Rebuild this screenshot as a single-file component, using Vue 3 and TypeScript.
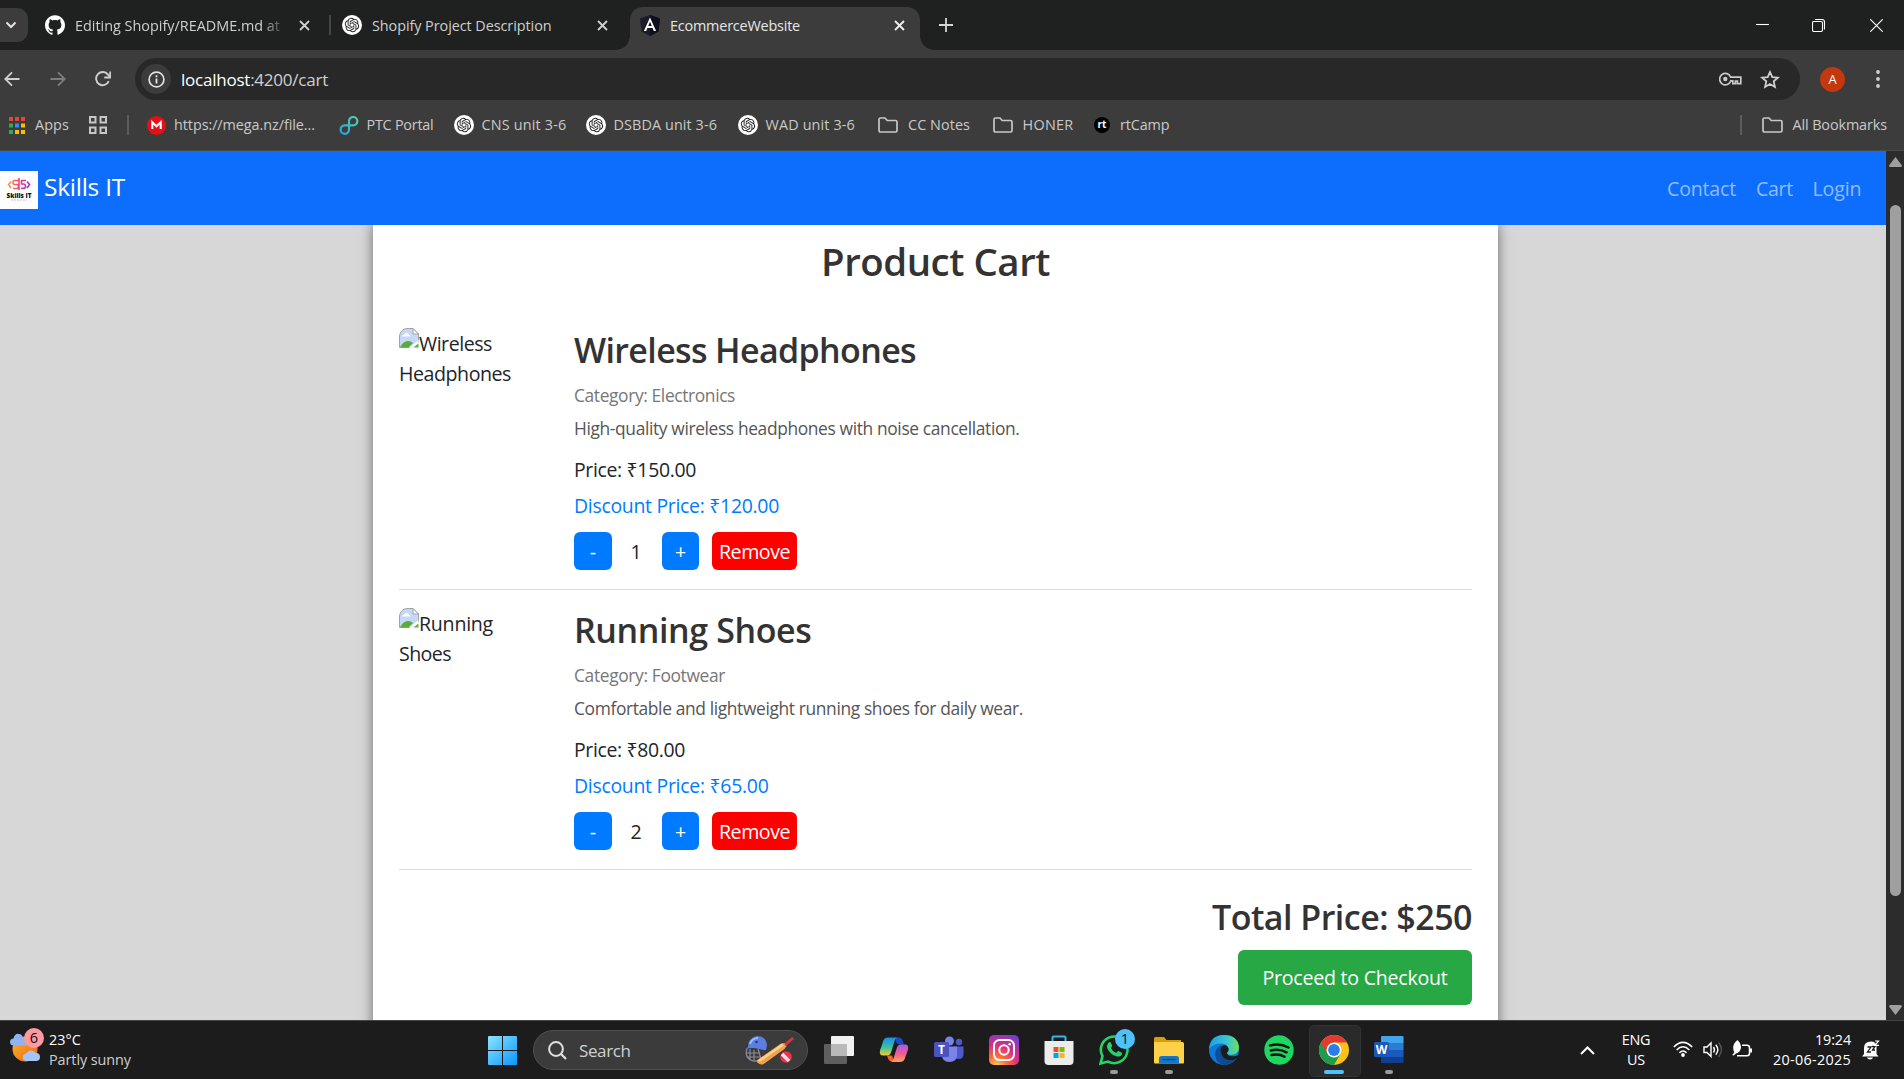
<script setup lang="ts">
interface Bookmark { label: string; icon: string; pitch: number; width: number }
interface CartItem {
  name: string; alt: string[]; altWidths: number[]; category: string; description: string
  price: string; discount: string; qty: number; widths: number[]
}

// Tracks a label in or out so that it takes exactly the given width.
const vFit = {
  mounted(el: HTMLElement, binding: { value: number }) {
    const range = document.createRange()
    range.selectNodeContents(el)
    const natural = range.getBoundingClientRect().width
    const count = (el.textContent ?? '').trim().length
    if (count) el.style.letterSpacing = `${(binding.value - natural) / count}px`
  },
}

const bookmarks: Bookmark[] = [
  { label: 'https://mega.nz/file...', icon: 'mega', pitch: 192.5, width: 141 },
  { label: 'PTC Portal', icon: 'ptc', pitch: 115, width: 67 },
  { label: 'CNS unit 3-6', icon: 'gpt', pitch: 132, width: 85 },
  { label: 'DSBDA unit 3-6', icon: 'gpt', pitch: 152, width: 103.5 },
  { label: 'WAD unit 3-6', icon: 'gpt', pitch: 140.5, width: 89.5 },
  { label: 'CC Notes', icon: 'folder', pitch: 114.5, width: 62 },
  { label: 'HONER', icon: 'folder', pitch: 99.5, width: 51 },
  { label: 'rtCamp', icon: 'rt', pitch: 90, width: 49.5 },
]

const items: CartItem[] = [
  {
    name: 'Wireless Headphones', alt: ['Wireless', 'Headphones'], altWidths: [73, 112],
    category: 'Category: Electronics', description: 'High-quality wireless headphones with noise cancellation.',
    price: 'Price: ₹150.00', discount: 'Discount Price: ₹120.00', qty: 1, widths: [342, 161, 445.5, 122, 205],
  },
  {
    name: 'Running Shoes', alt: ['Running', 'Shoes'], altWidths: [74, 52],
    category: 'Category: Footwear', description: 'Comfortable and lightweight running shoes for daily wear.',
    price: 'Price: ₹80.00', discount: 'Discount Price: ₹65.00', qty: 2, widths: [237.5, 151, 449, 111, 194.5],
  },
]

const knot = 'M22.2819 9.8211a5.9847 5.9847 0 0 0-.5157-4.9108 6.0462 6.0462 0 0 0-6.5098-2.9A6.0651 6.0651 0 0 0 4.9807 4.1818a5.9847 5.9847 0 0 0-3.9977 2.9 6.0462 6.0462 0 0 0 .7427 7.0966 5.98 5.98 0 0 0 .511 4.9107 6.051 6.051 0 0 0 6.5146 2.9001A5.9847 5.9847 0 0 0 13.2599 24a6.0557 6.0557 0 0 0 5.7718-4.2058 5.9894 5.9894 0 0 0 3.9977-2.9001 6.0557 6.0557 0 0 0-.7475-7.0729zm-9.022 12.6081a4.4755 4.4755 0 0 1-2.8764-1.0408l.1419-.0804 4.7783-2.7582a.7948.7948 0 0 0 .3927-.6813v-6.7369l2.02 1.1686a.071.071 0 0 1 .038.052v5.5826a4.504 4.504 0 0 1-4.4945 4.4944zm-9.6607-4.1254a4.4708 4.4708 0 0 1-.5346-3.0137l.142.0852 4.783 2.7582a.7712.7712 0 0 0 .7806 0l5.8428-3.3685v2.3324a.0804.0804 0 0 1-.0332.0615L9.74 19.9502a4.4992 4.4992 0 0 1-6.1408-1.6464zM2.3408 7.8956a4.485 4.485 0 0 1 2.3655-1.9728V11.6a.7664.7664 0 0 0 .3879.6765l5.8144 3.3543-2.0201 1.1685a.0757.0757 0 0 1-.071 0l-4.8303-2.7865A4.504 4.504 0 0 1 2.3408 7.872zm16.5963 3.8558L13.1038 8.364 15.1192 7.2a.0757.0757 0 0 1 .071 0l4.8303 2.7913a4.4944 4.4944 0 0 1-.6765 8.1042v-5.6772a.79.79 0 0 0-.407-.667zm2.0107-3.0231l-.142-.0852-4.7735-2.7818a.7759.7759 0 0 0-.7854 0L9.409 9.2297V6.8974a.0662.0662 0 0 1 .0284-.0615l4.8303-2.7866a4.4992 4.4992 0 0 1 6.6802 4.66zM8.3065 12.863l-2.02-1.1638a.0804.0804 0 0 1-.038-.0567V6.0742a4.4992 4.4992 0 0 1 7.3757-3.4537l-.142.0805L8.704 5.459a.7948.7948 0 0 0-.3927.6813zm1.0976-2.3654l2.602-1.4998 2.6069 1.4998v2.9994l-2.5974 1.4997-2.6067-1.4997Z'
</script>

<template>
  <div class="screen">
    <header class="tabs">
      <div class="tab-search">
        <svg width="12" height="8" viewBox="0 0 12 8"><path d="M1.5 1.5 6 6l4.500-4.500" fill="none" stroke="#e3e3e3" stroke-width="2" /></svg>
      </div>
      <div class="tab tab-a">
        <svg width="20" height="20" viewBox="0 0 24 24"><path fill="#fff" d="M12 .297c-6.630 0-12 5.373-12 12 0 5.303 3.438 9.800 8.205 11.385.6.113.82-.258.82-.577 0-.285-.01-1.040-.015-2.040-3.338.724-4.042-1.610-4.042-1.610C4.422 18.070 3.633 17.700 3.633 17.700c-1.087-.744.084-.729.084-.729 1.205.084 1.838 1.236 1.838 1.236 1.070 1.835 2.809 1.305 3.495.998.108-.776.417-1.305.76-1.605-2.665-.3-5.466-1.332-5.466-5.930 0-1.310.465-2.380 1.235-3.220-.135-.303-.54-1.523.105-3.176 0 0 1.005-.322 3.300 1.230.96-.267 1.980-.399 3-.405 1.020.006 2.040.138 3 .405 2.280-1.552 3.285-1.230 3.285-1.230.645 1.653.24 2.873.12 3.176.765.84 1.230 1.910 1.230 3.220 0 4.610-2.805 5.625-5.475 5.920.42.36.81 1.096.81 2.220 0 1.606-.015 2.896-.015 3.286 0 .315.21.69.825.57C20.565 22.092 24 17.592 24 12.297c0-6.627-5.373-12-12-12" /></svg>
        <span class="tab-title fade"><span v-fit="205">Editing Shopify/README.md at</span></span>
        <svg class="x" width="11" height="11" viewBox="0 0 11 11"><path d="M1 1l9 9M10 1l-9 9" /></svg>
      </div>
      <i class="tab-sep"></i>
      <div class="tab tab-b">
        <svg width="20" height="20" viewBox="0 0 20 20"><circle cx="10" cy="10" r="10" fill="#fff" /><path :d="knot" transform="translate(2.800 2.800) scale(.6)" fill="#222" /></svg>
        <span class="tab-title"><span v-fit="179.5">Shopify Project Description</span></span>
        <svg class="x" width="11" height="11" viewBox="0 0 11 11"><path d="M1 1l9 9M10 1l-9 9" /></svg>
      </div>
      <div class="tab tab-c">
        <svg width="20" height="21" viewBox="0 0 20 21"><path d="M10 0l10 3.500-1.500 13L10 21l-8.500-4.500L0 3.500z" fill="#1b1c2b" /><path d="M10 0v21l8.500-4.500L20 3.500z" fill="#0e0f1c" /><path d="M10 2.500 3.900 16h2.300l1.200-3.100h5.200l1.200 3.100h2.300zM10 6.700l1.800 4.300H8.200z" fill="#fff" /></svg>
        <span class="tab-title on"><span v-fit="130">EcommerceWebsite</span></span>
        <svg class="x on" width="11" height="11" viewBox="0 0 11 11"><path d="M1 1l9 9M10 1l-9 9" /></svg>
      </div>
      <svg class="plus" width="14" height="14" viewBox="0 0 14 14"><path d="M7 0v14M0 7h14" stroke="#d5d5d5" stroke-width="1.800" /></svg>
      <div class="win-controls">
        <svg width="13" height="13" viewBox="0 0 13 13"><path d="M0 5.500h13" /></svg>
        <svg width="13" height="13" viewBox="0 0 13 13"><rect x=".5" y="2.500" width="10" height="10" rx="1.500" /><path d="M3 .5h7a2.500 2.500 0 0 1 2.500 2.500v7.500" /></svg>
        <svg width="13" height="13" viewBox="0 0 13 13"><path d="M.3.3l12.400 12.400M12.700.3.3 12.700" /></svg>
      </div>
    </header>

    <div class="toolbar">
      <svg class="back" width="16" height="16" viewBox="0 0 16 16"><path d="M15.500 8H1.500M8 1.300 1.300 8 8 14.700" fill="none" stroke="#d0d0d0" stroke-width="1.800" /></svg>
      <svg class="forward" width="16" height="16" viewBox="0 0 16 16"><path d="M.5 8h14M8 1.300 14.700 8 8 14.700" fill="none" stroke="#7d7d7d" stroke-width="1.800" /></svg>
      <svg class="reload" width="16" height="16" viewBox="0 0 16 16"><path d="M13.800 10.200A6.600 6.600 0 1 1 13 3.600L14.600 5.500" fill="none" stroke="#d0d0d0" stroke-width="1.900" /><path d="M15.200.6v5.900H9.300" fill="none" stroke="#d0d0d0" stroke-width="1.800" /></svg>
      <div class="omnibox">
        <span class="info"><svg width="17" height="17" viewBox="0 0 17 17"><circle cx="8.500" cy="8.500" r="7.400" fill="none" stroke="#e3e3e3" stroke-width="1.700" /><path d="M8.500 7.500v5M8.500 4.300v1.900" stroke="#e3e3e3" stroke-width="1.800" /></svg></span>
        <span class="url"><span v-fit="147">localhost<span class="path">:4200/cart</span></span></span>
        <svg class="key" width="23" height="14" viewBox="0 0 23 14"><path d="M11.700 5.200H21.800v6.500h-3.400V9h-2v2.700h-2.600V8.800h-2A5.700 5.700 0 1 1 11.700 5.200z" fill="none" stroke="#c9c9c9" stroke-width="1.700" /><circle cx="6.300" cy="7" r="2.200" fill="#c9c9c9" /></svg>
        <svg class="star" width="20" height="19" viewBox="0 0 20 19"><path d="M10 2l2.300 5.100 5.600.6-4.200 3.700 1.200 5.500L10 14l-4.900 2.900 1.200-5.500-4.200-3.700 5.600-.6z" fill="none" stroke="#d0d0d0" stroke-width="1.800" /></svg>
      </div>
      <span class="avatar">A</span>
      <svg class="dots" width="4" height="18" viewBox="0 0 4 18"><g fill="#d0d0d0"><circle cx="2" cy="2" r="1.900" /><circle cx="2" cy="9" r="1.900" /><circle cx="2" cy="16" r="1.900" /></g></svg>
    </div>

    <nav class="bookmarks">
      <svg width="16" height="17" viewBox="0 0 16 17" class="apps"><path d="M0 0h4v4H0zM6 0h4v4H6zM12 0h4v4h-4z" fill="#ea4335" /><path d="M0 6.500h4v4H0zM0 13h4v4H0z" fill="#34a853" /><path d="M6 6.500h4v4H6z" fill="#4285f4" /><path d="M12 6.500h4v4h-4zM6 13h4v4H6zM12 13h4v4h-4z" fill="#fbbc04" /></svg>
      <span class="bm-label apps-label"><span v-fit="34">Apps</span></span>
      <svg width="18" height="18" viewBox="0 0 18 18" class="groups"><path d="M1 1h5.500v5.500H1zM11.500 1H17v5.500h-5.500zM1 11.500h5.500V17H1zM11.500 11.500H17V17h-5.500z" fill="none" stroke="#c7c7c7" stroke-width="2" /></svg>
      <i class="bm-sep"></i>
      <div v-for="b in bookmarks" :key="b.label" class="bm" :style="{ width: b.pitch + 'px' }">
        <span class="bm-icon">
          <svg v-if="b.icon === 'mega'" width="19" height="19" viewBox="0 0 19 19"><circle cx="9.500" cy="9.500" r="9.500" fill="#e60f18" /><path d="M5.300 13V6.200l4.200 4 4.200-4V13" fill="none" stroke="#fff" stroke-width="2.100" /></svg>
          <svg v-else-if="b.icon === 'ptc'" width="20" height="20" viewBox="0 0 20 20">
            <defs><linearGradient id="ptc" x1="0" y1="1" x2="1" y2="0"><stop offset="0" stop-color="#23a6dc" /><stop offset="1" stop-color="#57cfa8" /></linearGradient></defs>
            <path d="M10 14.500V5.500a4.200 4.200 0 1 1 4.200 4.900H5.500a4.200 4.200 0 1 0 4.500 4.100z" fill="none" stroke="url(#ptc)" stroke-width="2.200" />
          </svg>
          <svg v-else-if="b.icon === 'gpt'" width="20" height="20" viewBox="0 0 20 20"><circle cx="10" cy="10" r="10" fill="#fff" /><path :d="knot" transform="translate(2.800 2.800) scale(.6)" fill="#222" /></svg>
          <svg v-else-if="b.icon === 'folder'" width="20" height="16" viewBox="0 0 20 16"><path d="M1 13V2.500Q1 1 2.500 1H7l2.200 2.500h8.300q1.500 0 1.500 1.500v8.500q0 1.500-1.500 1.500h-15Q1 15 1 13z" fill="none" stroke="#c7c7c7" stroke-width="1.700" /></svg>
          <span v-else class="rt">rt</span>
        </span>
        <span class="bm-label" :class="{ wide: b.icon === 'folder' }"><span v-fit="b.width">{{ b.label }}</span></span>
      </div>
      <div class="all">
        <i class="bm-sep"></i>
        <svg width="21" height="16" viewBox="0 0 21 16"><path d="M1 13V2.500Q1 1 2.500 1H7l2.200 2.500h9.300q1.500 0 1.500 1.500v8.500q0 1.500-1.500 1.500h-16Q1 15 1 13z" fill="none" stroke="#c7c7c7" stroke-width="1.700" /></svg>
        <span class="bm-label"><span v-fit="94.5">All Bookmarks</span></span>
      </div>
    </nav>

    <div class="viewport">
      <main class="page">
        <div class="navbar">
          <svg class="logo" width="38" height="38" viewBox="0 0 38 38">
            <defs><linearGradient id="lg" x1="0" x2="1"><stop offset="0" stop-color="#ff9a3c" /><stop offset=".5" stop-color="#f4437a" /><stop offset="1" stop-color="#9b30d9" /></linearGradient></defs>
            <rect width="38" height="38" fill="#fff" />
            <path d="M11 10.500 8.500 13.500 11 17M27 10.500l2.500 3-2.500 3.500M19.500 9.500h-5q-1.500 0-1.500 2t1.500 2h2.500q1.500 0 1.500 2t-1.500 2h-4M19 7v12M26 9.500h-4.500v3.500h2q2 0 2 2.200t-2 2.200h-2.500" fill="none" stroke="url(#lg)" stroke-width="1.600" />
            <text x="6.500" y="26.500" font-size="6" font-weight="800" textLength="25" lengthAdjust="spacingAndGlyphs" fill="#111" font-family="Open Sans, sans-serif">Skills IT</text>
            <path d="M11 29h16" stroke="#dba6ec" stroke-width="1" stroke-dasharray="2 1" />
          </svg>
          <span class="brand"><span v-fit="81">Skills IT</span></span>
          <span class="links"><a class="l1"><span v-fit="69">Contact</span></a><a class="l2"><span v-fit="37">Cart</span></a><a class="l3"><span v-fit="49">Login</span></a></span>
        </div>
        <section class="card">
          <h1><span v-fit="229">Product Cart</span></h1>
          <article v-for="it in items" :key="it.name" class="item">
            <div class="thumb">
              <div class="alt">
                <svg width="20" height="20" viewBox="0 0 20 20">
                  <path d="M.5 19.500V8Q1.500 1 8 .5h6L19.500 6v8L14 19.500z" fill="#c5d8f8" stroke="#a3a3a3" />
                  <path d="M14 .5V6h5.500z" fill="#fff" stroke="#a3a3a3" />
                  <path d="M3 8.500q.5-2 2.500-2 .5-2 2.500-1.500Q10 5.500 10 7q1.500 0 1.500 1.500z" fill="#fff" />
                  <path d="M1 19.500q3-6.500 8-6.500 3 0 5 2l-4.500 4.500z" fill="#5aad3a" />
                  <path d="M10 20l9.500-8v3L14 20z" fill="#fff" /><path d="M14.500 19.500 19.500 15.500v4z" fill="#5aad3a" />
                </svg><span v-fit="it.altWidths[0]">{{ it.alt[0] }}</span>
              </div>
              <div class="alt"><span v-fit="it.altWidths[1]">{{ it.alt[1] }}</span></div>
            </div>
            <div class="details">
              <h2><span v-fit="it.widths[0]">{{ it.name }}</span></h2>
              <p class="category"><span v-fit="it.widths[1]">{{ it.category }}</span></p>
              <p class="description"><span v-fit="it.widths[2]">{{ it.description }}</span></p>
              <p class="price"><span v-fit="it.widths[3]">{{ it.price }}</span></p>
              <p class="discount"><span v-fit="it.widths[4]">{{ it.discount }}</span></p>
              <div class="controls">
                <button class="minus">-</button><span class="qty">{{ it.qty }}</span><button class="add">+</button>
                <button class="remove"><span v-fit="71">Remove</span></button>
              </div>
            </div>
          </article>
          <div class="summary">
            <h2><span v-fit="260">Total Price: $250</span></h2>
            <button class="checkout"><span v-fit="185">Proceed to Checkout</span></button>
          </div>
        </section>
      </main>
      <aside class="scrollbar">
        <svg width="13" height="10" viewBox="0 0 13 10"><path d="M6.500 0 13 8.500q0 1.500-1.500 1.500h-10Q0 10 0 8.500z" fill="#9f9f9f" /></svg>
        <i class="thumb-bar"></i>
        <svg width="13" height="10" viewBox="0 0 13 10"><path d="M6.500 10 13 1.500Q13 0 11.500 0h-10Q0 0 0 1.500z" fill="#9f9f9f" /></svg>
      </aside>
    </div>

    <footer class="taskbar">
      <div class="weather">
        <svg width="36" height="36" viewBox="0 0 36 36">
          <defs><linearGradient id="sun" x1="0" y1="0" x2="1" y2="1"><stop offset="0" stop-color="#f8b62d" /><stop offset="1" stop-color="#f0640f" /></linearGradient></defs>
          <circle cx="16" cy="21" r="12.500" fill="url(#sun)" />
          <path d="M4.500 17.500a3.500 3.500 0 0 1 0-7Q6 5 10 6 13 6 14 9.500L17.500 17.500z" fill="#8fb4f2" />
          <path d="M17 33a3.800 3.800 0 0 1 0-7.500 6 6 0 0 1 10-.5 4 4 0 0 1 0 8z" fill="#a4c4fa" />
        </svg>
        <span class="wbadge">6</span>
        <div class="wtext"><span><b v-fit="32">23°C</b></span><span class="dim"><b v-fit="82">Partly sunny</b></span></div>
      </div>
      <svg class="start" width="29" height="29" viewBox="0 0 29 29"><defs><linearGradient id="win" x1="0" y1="0" x2="1" y2="1" ><stop offset="0" stop-color="#8be3ff" /><stop offset="1" stop-color="#0a97ff" /></linearGradient></defs><path d="M1 0h13v14H0V1q0-1 1-1zM15 0h13q1 0 1 1v13H15zM0 15h14v14H1q-1 0-1-1zM15 15h14v13q0 1-1 1H15z" fill="url(#win)" /></svg>
      <div class="search">
        <svg class="glass" width="19" height="19" viewBox="0 0 19 19"><circle cx="8" cy="8" r="6.900" fill="none" stroke="#e0e0e0" stroke-width="2" /><path d="M13 13l5 5" stroke="#e0e0e0" stroke-width="2.300" /></svg>
        <span class="search-label"><span v-fit="51.5">Search</span></span>
        <svg class="cricket" width="50" height="30" viewBox="0 0 50 30">
          <path d="M3 14q-3 9 6 12 6 1 10-3M6 14v11M10 15v11M2 18h14M3 22h14M14 14l3 10" fill="none" stroke="#8b8b98" stroke-width="1.200" />
          <path d="M1 14.500 4 12Q4 3 13 1q9 0 10 9l-1 5q-4 0-7-1-7-2-14 .5z" fill="#5b7fe0" /><path d="M6 9Q8 3 14 3" fill="none" stroke="#9db8ff" stroke-width="2" /><circle cx="12.500" cy="7" r="1.300" fill="#243a86" />
          <path d="M12.500 25.500 37 8.500 41 8l1.500 3-2 3L19 29.500q-5 .5-6.500-4z" fill="#f0a24f" /><path d="M15 26 39 9.500" stroke="#ffd08c" stroke-width="2.400" /><path d="M41 10l8-7" stroke="#e0353f" stroke-width="2.600" />
          <circle cx="42" cy="22" r="5.800" fill="#ee3340" /><path d="M38 19l7 7" stroke="#fbd5e8" stroke-width="3.600" />
        </svg>
      </div>
      <div class="apps-row">
        <span class="app"><svg width="30" height="30" viewBox="0 0 30 30"><rect x="7" y="1" width="23" height="20" rx="1" fill="#f1f1f1" /><rect x="0" y="9" width="23" height="20" rx="1" fill="#5f5f5f" /><path d="M7 9h16v12H7z" fill="#b9b9b9" /></svg></span>
        <span class="app"><svg width="30" height="30" viewBox="0 0 30 30">
          <defs><linearGradient id="ca" x1="0" y1="0" x2="0" y2="1"><stop offset="0" stop-color="#1b8df0" /><stop offset=".55" stop-color="#3ac2a0" /><stop offset="1" stop-color="#f6c92d" /></linearGradient><linearGradient id="cb" x1="0" y1="0" x2="0" y2="1"><stop offset="0" stop-color="#a45bea" /><stop offset=".5" stop-color="#ee5a96" /><stop offset="1" stop-color="#ffa052" /></linearGradient></defs>
          <path d="M16 2.500h4q3 0 4 4l1 3h-4q-3 0-4-3z" fill="#1b49c8" /><path d="M8 20.500h5l2 6h-2q-3 0-4-3z" fill="#f0622f" />
          <path d="M9 2.500h10q-2.500 0-3.300 3L12 17.500q-.9 3-4 3H4q-4 0-3-5L4 6.500Q5 2.500 9 2.500z" fill="url(#ca)" />
          <path d="M21 27H11q2.500 0 3.300-3L18 12.500q.9-3 4-3h4q4 0 3 5L26 23q-1 4-5 4z" fill="url(#cb)" />
        </svg></span>
        <span class="app"><svg width="30" height="30" viewBox="0 0 30 30"><circle cx="25" cy="7" r="3.200" fill="#5059c9" /><circle cx="15.500" cy="6" r="4.500" fill="#7b83eb" /><path d="M20 11.500h9.500V19q0 5-5 5-4 0-4.500-4z" fill="#5059c9" /><path d="M8 11.500h15V20q0 7-7.500 7T8 20z" fill="#7b83eb" /><rect y="7" width="15" height="15" rx="1.500" fill="#4b53bc" /><text x="7.500" y="18.700" text-anchor="middle" font-size="12" font-weight="700" fill="#fff" font-family="Open Sans, sans-serif">T</text></svg></span>
        <span class="app"><svg width="30" height="30" viewBox="0 0 30 30"><defs><radialGradient id="ig" cx=".25" cy="1.050" r="1.200"><stop offset="0" stop-color="#ffd45c" /><stop offset=".3" stop-color="#fb6a3a" /><stop offset=".6" stop-color="#d92d83" /><stop offset="1" stop-color="#6f3fd0" /></radialGradient></defs><rect width="30" height="30" rx="5" fill="url(#ig)" /><rect x="5" y="5" width="20" height="20" rx="5.500" fill="none" stroke="#fff" stroke-width="2" /><circle cx="15" cy="15" r="4.700" fill="none" stroke="#fff" stroke-width="2" /><circle cx="20.700" cy="9.300" r="1.300" fill="#fff" /></svg></span>
        <span class="app"><svg width="30" height="30" viewBox="0 0 30 30"><path d="M8.500 7V2.500q0-1 1-1h11q1 0 1 1V7" fill="none" stroke="#35b5e9" stroke-width="2" /><path d="M.5 6h29v20q0 4-4 4h-21q-4 0-4-4z" fill="#ececec" /><path d="M9.500 12h5v5h-5z" fill="#f25022" /><path d="M15.500 12h5v5h-5z" fill="#7fba00" /><path d="M9.500 18h5v5h-5z" fill="#00a4ef" /><path d="M15.500 18h5v5h-5z" fill="#ffb900" /></svg></span>
        <span class="app"><svg width="30" height="30" viewBox="0 0 30 30"><path d="M1.500 28.500l2-7.300A13.300 13.300 0 1 1 9 26.600z" fill="none" stroke="#25d366" stroke-width="2.600" /><path d="M9.300 8q1-1.300 2.300-.8l1.600 3.600q0 1-1.400 2.300 1.800 3.500 5.300 5 1.500-2 2.300-2l3.500 1.700q.5 1.700-1.300 3.100-2 1.300-5 .1-5.500-2-8.300-7.600-1-3 1-5.400z" fill="#25d366" /></svg><span class="wabadge">1</span><i class="dot"></i></span>
        <span class="app"><svg width="30" height="30" viewBox="0 0 30 30"><path d="M0 3.500Q0 2 1.500 2H10l2.500 3H27v6H0z" fill="#dd9c05" /><path d="M0 7h28.500Q30 7 30 8.500v19q0 1-1 1H1q-1 0-1-1z" fill="#ffd148" /><path d="M5 28.500v-5Q5 21 7.500 21h15q2.500 0 2.500 2.500v5z" fill="#1477c8" /><path d="M8.500 24.500h13" stroke="#0a4f93" stroke-width="1.500" /></svg><i class="dot"></i></span>
        <span class="app"><svg width="30" height="30" viewBox="0 0 30 30"><defs><linearGradient id="ea" x1="0" x2="1"><stop offset="0" stop-color="#1d9fe6" /><stop offset=".6" stop-color="#36c6d3" /><stop offset="1" stop-color="#6ede5a" /></linearGradient></defs><circle cx="15" cy="15" r="15" fill="#0f7ad6" /><path d="M11.500 16q0 7.500 7.500 9 5 .5 8.500-2Q23 30 15 30 7 29 6 20q0-9 9-10-3.500 2-3.500 6z" fill="#0d4f9e" /><path d="M0 14Q1 0 15 0q14 0 15 12.500-.5 7-7.500 7.300-5 .2-4.500-2 2-2 1.500-4.500Q18 9 12.500 8.500 4 8.500 0 14z" fill="url(#ea)" /><path d="M18 17.800q2-2 1.500-4.500-1-2.500-3.500-3.500-4.500 1-4.500 6 0 7 7.500 9.200 6 1 9.500-2.500 1.500-2 .5-2.200-2.500 1.300-6.500 1Q18 20.500 18 17.800z" fill="#1c1c1c" /><path d="M13 20q2.500 6 9 5.800 4-.5 6-3Q23 30 15 30q-4-4-3.500-14z" fill="#114a8b" /></svg></span>
        <span class="app"><svg width="30" height="30" viewBox="0 0 30 30"><circle cx="15" cy="15" r="14.700" fill="#1ed760" /><path d="M6 10.500q10-2.800 18.500 2M6.800 15.500q8.500-2.300 15.700 1.800M7.500 20q7-1.700 13 1.600" fill="none" stroke="#141414" stroke-width="2.500" stroke-linecap="round" /></svg></span>
        <span class="app active"><svg width="30" height="30" viewBox="0 0 30 30"><circle cx="15" cy="15" r="15" fill="#fbc116" /><path d="M15 15 2 7.500A15 15 0 0 0 15 30l6.500-11.300z" fill="#1f9d4c" /><path d="M2 7.500A15 15 0 0 1 28 7.500H15L8.500 18.800z" fill="#e33b2e" /><circle cx="15" cy="15" r="7.500" fill="#fff" /><circle cx="15" cy="15" r="5.900" fill="#2b7de9" /></svg><i class="dot blue"></i></span>
        <span class="app"><svg width="30" height="30" viewBox="0 0 30 30"><path d="M8 1h20.500q1 0 1 1v6H7V2q0-1 1-1z" fill="#41a5ee" /><path d="M7 8h22.500v7H7z" fill="#2b7cd3" /><path d="M7 15h22.500v7H7z" fill="#185abd" /><path d="M7 22h22.500v5q0 1-1 1H8q-1 0-1-1z" fill="#103f91" /><rect x="0" y="7" width="15" height="15" rx="1.500" fill="#1b57b8" /><text x="7.500" y="18.700" text-anchor="middle" font-size="12" font-weight="700" fill="#fff" font-family="Open Sans, sans-serif">W</text></svg><i class="dot"></i></span>
      </div>
      <div class="tray">
        <svg class="chev" width="15" height="9" viewBox="0 0 15 9"><path d="M1 8l6.500-6.500L14 8" fill="none" stroke="#fff" stroke-width="2" /></svg>
        <div class="lang"><span><b v-fit="28.500">ENG</b></span><span><b v-fit="18">US</b></span></div>
        <svg class="wifi" width="20" height="16" viewBox="0 0 20 16"><path d="M.8 6q9.200-9.200 18.400 0M3.600 9q6.400-6.400 12.800 0M6.400 11.800q3.600-3.600 7.200 0" fill="none" stroke="#fff" stroke-width="1.600" /><circle cx="10" cy="14" r="1.900" fill="#fff" /></svg>
        <svg class="speaker" width="20" height="18" viewBox="0 0 20 18"><path d="M1 6h3l4-4v13.500l-4-4H1z" fill="none" stroke="#fff" stroke-width="1.400" /><path d="M10.500 6q2 3 0 5.500M12.800 3.800q4 5 0 10" fill="none" stroke="#fff" stroke-width="1.400" /><path d="M15.500 1.500q6 7 0 14.500" fill="none" stroke="#555" stroke-width="1.400" /></svg>
        <svg class="battery" width="21" height="18" viewBox="0 0 21 18"><path d="M10 5.200h5q2.500 0 2.500 2.500v5.500q0 2.500-2.500 2.500H5" fill="none" stroke="#fff" stroke-width="1.500" /><path d="M18 8.500h2v4h-2z" fill="#fff" /><path d="M5.500 0Q10 4 8.800 8.500 8 12.500 4 13.500l-2.800 2.300-.9-1 2-2.300Q-1 5 5.500 0z" fill="#fff" /></svg>
        <div class="clock"><span><b v-fit="36">19:24</b></span><span><b v-fit="78">20-06-2025</b></span></div>
        <svg class="bell" width="18" height="20" viewBox="0 0 18 20"><path d="M2 14V8q0-6.500 7-6.500 5 0 5.500 5V14l2 2.500H0z" fill="#fff" /><path d="M5 17.500h6q-.5 2-3 2t-3-2z" fill="#fff" /><path d="M5.500 7H9l-3.500 5H9M10 6.500h3L10.500 10H13" fill="none" stroke="#1c1c1c" stroke-width="1.300" /><path d="M13 1h3.500L13 5.300h4" fill="none" stroke="#fff" stroke-width="1.200" /></svg>
      </div>
    </footer>
  </div>
</template>

<style>
body { overflow: hidden; background: #1c1c1c; }
</style>

<style scoped>
* { box-sizing: border-box; }
.screen { width: 1904px; height: 1079px; overflow: hidden; display: flex; flex-direction: column; font-family: "Open Sans", "Noto Sans", sans-serif; color: #212529; white-space: nowrap; }
svg { display: block; flex: none; }
b { font-weight: 400; }
i { display: block; flex: none; }
h1, h2, p { margin: 0; }
button { border: 0; padding: 0; font: inherit; color: #fff; }

.tabs { height: 50px; flex: none; background: #1f2120; display: flex; align-items: center; }
.tab-search { width: 28px; height: 34px; background: #3c3c3c; border-radius: 0 11px 11px 0; display: flex; align-items: center; padding-left: 5px; }
.tab { display: flex; align-items: center; height: 43px; }
.tab-a { margin-left: 17px; width: 284px; }
.tab-title { font-size: 14.4px; line-height: 20px; color: #cfcfcf; margin-left: 10px; padding-top: 1px; flex: 1; overflow: hidden; }
.tab-title.on { color: #e6e6e6; }
.tab-title.fade { flex: none; width: 215px; mask-image: linear-gradient(90deg, #000 186px, rgba(0, 0, 0, .25) 206px); }
.x { stroke: #d0d0d0; stroke-width: 1.8; }
.x.on { stroke: #f0f0f0; }
.tab-a .x { margin-left: 9px; }
.tab-sep { width: 2px; height: 20px; background: #454545; }
.tab-b { margin-left: 11px; width: 266px; }
.tab-c { position: relative; width: 290px; height: 43px; margin: 7px 0 0 22px; padding: 0 15px 7px 10px; background: #3c3c3c; border-radius: 13px 13px 0 0; }
.tab-c::before, .tab-c::after { content: ""; position: absolute; bottom: 0; width: 14px; height: 14px; }
.tab-c::before { right: 100%; background: radial-gradient(circle at 0 0, #1f2120 13.5px, #3c3c3c 14px); }
.tab-c::after { left: 100%; background: radial-gradient(circle at 100% 0, #1f2120 13.5px, #3c3c3c 14px); }
.plus { margin-left: 19px; }
.win-controls { margin: 0 21px 0 auto; display: flex; }
.win-controls svg { margin-left: 45px; fill: none; stroke: #fff; stroke-width: 1.1; }
.win-controls svg:nth-child(2) { margin-left: 43px; }

.toolbar { height: 58px; flex: none; background: #3c3c3c; display: flex; align-items: center; }
.back { margin-left: 4px; }
.forward { margin-left: 30px; }
.reload { margin-left: 29px; }
.omnibox { margin-left: 24px; width: 1665px; height: 42px; border-radius: 21px; background: #282828; display: flex; align-items: center; padding-left: 6px; }
.info { width: 30px; height: 30px; border-radius: 50%; background: #3c3c3c; display: grid; place-items: center; }
.url { margin-left: 10px; padding-top: 1px; font-size: 17px; line-height: 24px; color: #fff; }
.path { color: #d0d0d0; }
.key { margin-left: auto; }
.star { margin: 0 20px 0 18px; }
.avatar { margin-left: 20px; width: 25px; height: 25px; border-radius: 50%; background: #c2380f; color: #fff; font: 13px/25px "Open Sans", sans-serif; text-align: center; }
.dots { margin-left: 31px; }

.bookmarks { height: 43px; flex: none; background: #3c3c3c; border-bottom: 1px solid #4a4a4a; display: flex; align-items: center; padding-bottom: 8px; color: #c9c9c9; }
.bm-label { font-size: 14.4px; line-height: 20px; margin-left: 8px; }
.bm-label.wide { margin-left: 10px; }
.apps { margin-left: 9px; }
.apps-label { width: 34px; margin-left: 10px; }
.groups { margin-left: 20px; }
.bm-sep { width: 2px; height: 20px; background: #5c5c5c; margin: 0 17px 0 20px; }
.bm { display: flex; align-items: center; }
.bm-icon { width: 20px; display: grid; place-items: center; }
.rt { width: 16px; height: 16px; border-radius: 50%; background: #000; color: #fff; font: 700 10px/15px "Open Sans", sans-serif; text-align: center; }
.all { margin: 0 17px 0 auto; display: flex; align-items: center; }
.all .bm-sep { margin: 0 20px 0 0; }
.all .bm-label { margin-left: 10px; }

.viewport { height: 869px; flex: none; display: flex; }
.page { width: 1886px; background: #d7d7d7; overflow: hidden; }
.navbar { position: relative; height: 74px; background: #0d6efd; display: flex; color: #fff; }
.logo { margin-top: 20px; }
.brand { margin: 18px 0 0 6px; font-size: 24.5px; line-height: 36px; }
.links { margin: 23px 24.5px 0 auto; display: flex; font-size: 19.6px; line-height: 30px; color: rgba(255, 255, 255, .55); }
.l2, .l3 { margin-left: 20px; }
.l3 { margin-left: 19.5px; }
.card { width: 1125px; height: 830px; margin-left: 373px; padding: 12px 26px 0; background: #fff; box-shadow: 0 0 12px rgba(0, 0, 0, .5); }
h1 { height: 48px; line-height: 48px; font-size: 38.4px; font-weight: 600; color: #333; text-align: center; margin-bottom: 25px; }
h2 { height: 42px; line-height: 42px; font-size: 34px; font-weight: 600; color: #333; }
.item { height: 280px; border-bottom: 1px solid #ddd; padding-top: 18px; display: flex; }
.thumb { width: 175px; font-size: 19.6px; line-height: 30px; }
.alt span { padding-top: 1px; margin-bottom: -1px; }
.alt { display: flex; }
.item h2 { line-height: 44px; }
.category, .description { font-size: 17.4px; line-height: 26px; }
.category { margin-top: 12px; color: #777; }
.description { margin-top: 7px; color: #555; }
.price, .discount { font-size: 19.4px; line-height: 30px; }
.price { margin-top: 14px; }
.discount { margin-top: 6px; color: #007bff; }
.controls { display: flex; margin-top: 11px; font-size: 19.6px; line-height: 38px; }
.minus, .add { width: 38px; height: 38px; background: #007bff; border-radius: 6px; }
.add { width: 37px; }
.minus, .add, .remove { padding-top: 1px; }
.qty { width: 48px; height: 38px; padding-top: 1px; margin-right: 2px; text-align: center; }
.remove { width: 85px; height: 38px; margin-left: 13px; background: #f00; border-radius: 6px; }
.summary { display: flex; flex-direction: column; align-items: flex-end; margin-top: 26px; }
.checkout { width: 234px; height: 55px; margin-top: 12px; background: #28a745; border-radius: 6px; font-size: 19.6px; }
.scrollbar { width: 18px; background: #2c2c2c; display: flex; flex-direction: column; align-items: center; padding: 6px 0 5px 1px; justify-content: space-between; }
.thumb-bar { width: 11px; height: 691px; margin: 38px 0 109px; border-radius: 6px; background: #9f9f9f; }

.taskbar { height: 59px; flex: none; background: #1c1c1c; box-shadow: inset 0 1px #454545; display: flex; color: #fff; font-size: 14.4px; line-height: 20px; }
.weather { position: relative; width: 488px; display: flex; padding-left: 9px; }
.weather svg { margin-top: 8px; }
.wbadge, .wabadge { position: absolute; width: 20px; height: 20px; border-radius: 50%; text-align: center; font-size: 14.5px; line-height: 20px; color: #111; }
.wbadge { left: 24px; top: 8px; background: #ff99a4; }
.wabadge { left: 29px; top: 9px; background: #4cc2ff; }
.wtext { margin: 10px 0 0 4px; display: flex; flex-direction: column; }
.dim { color: #cfcfcf; }
.start { margin-top: 16px; }
.search { width: 275px; height: 40px; margin: 10px 3px 0 16px; border-radius: 20px; background: #3b3b3b; border: 1px solid #505050; display: flex; align-items: center; padding-left: 14px; }
.search-label { margin-left: 12px; padding-top: 1px; font-size: 17px; line-height: 24px; color: #d0d0d0; }
.cricket { margin: 0 13px 0 auto; }
.apps-row { display: flex; }
.app { position: relative; width: 55px; display: flex; justify-content: center; padding-top: 15px; }
.active::before { content: ""; position: absolute; left: 3px; top: 5px; width: 50px; height: 50px; border-radius: 5px; background: #2a2a2a; border: 1px solid #333; }
.active svg { position: relative; }
.dot { position: absolute; left: 24px; top: 50px; width: 8px; height: 4px; border-radius: 2px; background: #9a9a9a; }
.dot.blue { left: 18px; width: 20px; background: #4cc2ff; }
.tray { margin-left: auto; display: flex; }
.chev { margin-top: 26px; }
.lang { width: 30px; margin: 10px 0 0 26px; display: flex; flex-direction: column; align-items: center; }
.wifi { margin: 21px 0 0 22px; }
.speaker { margin: 21px 0 0 10px; }
.battery { margin: 20px 0 0 9px; }
.clock { margin: 10px 0 0 20px; display: flex; flex-direction: column; align-items: flex-end; }
.bell { margin: 20px 24px 0 11px; }
</style>
